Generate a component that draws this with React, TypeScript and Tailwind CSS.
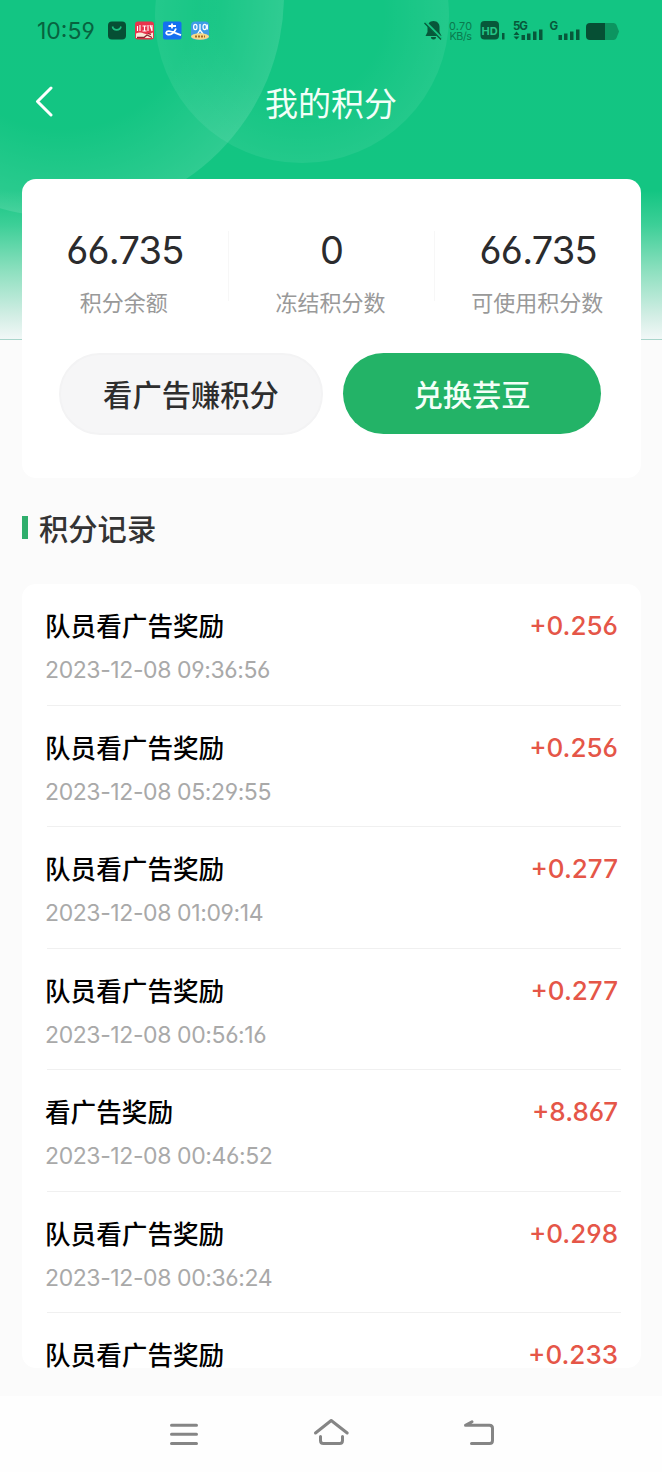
const INTER = "font-['Inter','Noto_Sans_CJK_SC',sans-serif] [font-feature-settings:'cv03','cv04']";

type PointRecord = { id: number; title: string; time?: string; amount: string };

const records: PointRecord[] = [
  { id: 1, title: '队员看广告奖励', time: '2023-12-08 09:36:56', amount: '+0.256' },
  { id: 2, title: '队员看广告奖励', time: '2023-12-08 05:29:55', amount: '+0.256' },
  { id: 3, title: '队员看广告奖励', time: '2023-12-08 01:09:14', amount: '+0.277' },
  { id: 4, title: '队员看广告奖励', time: '2023-12-08 00:56:16', amount: '+0.277' },
  { id: 5, title: '看广告奖励', time: '2023-12-08 00:46:52', amount: '+8.867' },
  { id: 6, title: '队员看广告奖励', time: '2023-12-08 00:36:24', amount: '+0.298' },
  { id: 7, title: '队员看广告奖励', amount: '+0.233' },
];

function HeaderBackground() {
  return (
    <svg className="absolute left-0 top-0" width="662" height="340" viewBox="0 0 662 340" aria-hidden="true">
      <defs>
        <linearGradient id="base" x1="0" y1="0" x2="0" y2="1">
          <stop offset="0" stopColor="#13c583" />
          <stop offset="0.56" stopColor="#13c582" />
          <stop offset="0.66" stopColor="#3ccf97" />
          <stop offset="0.8" stopColor="#8fe0c0" />
          <stop offset="0.93" stopColor="#d3eee5" />
          <stop offset="1" stopColor="#f3f8f8" />
        </linearGradient>
        <radialGradient id="ringA" gradientUnits="userSpaceOnUse" cx="62" cy="-5" r="222">
          <stop offset="0.6" stopColor="#fff" stopOpacity="0" />
          <stop offset="1" stopColor="#fff" stopOpacity="0.12" />
        </radialGradient>
        <radialGradient id="ringB" gradientUnits="userSpaceOnUse" cx="302" cy="16" r="147">
          <stop offset="0.55" stopColor="#fff" stopOpacity="0" />
          <stop offset="1" stopColor="#fff" stopOpacity="0.07" />
        </radialGradient>
      </defs>
      <rect width="662" height="340" fill="url(#base)" />
      <circle cx="62" cy="-5" r="222" fill="url(#ringA)" />
      <circle cx="302" cy="16" r="147" fill="url(#ringB)" />
    </svg>
  );
}

function StatusBar() {
  return (
    <div className="flex h-[62px] items-center justify-between pl-[37px] pr-[42px] text-[#07633f]">
      <div className="flex items-center">
        <span className={`w-[70px] text-[23px] leading-[30px] ${INTER}`}>10:59</span>
        <svg width="104" height="20" viewBox="107 21 104 20" aria-hidden="true">
          <rect x="108" y="21.500" width="18" height="18" rx="4" fill="#064f34" />
          <path d="M112.500 26.500c.8 4.500 7.500 4.500 8.500 0" fill="none" stroke="#1bbf80" strokeWidth="1.700" />
          <rect x="135" y="21.500" width="19" height="18" rx="3" fill="#e8344c" />
          <path d="M137.500 26v5M140 25v6M142.500 26h4M144.500 26v5M142.500 31h4M148 25v6M150 25l2 6M152 25v6" stroke="#fff" strokeWidth="1.100" fill="none" />
          <path d="M136 33.500q4-2 8 0t9-1v5.500h-17z" fill="#fbe9d8" />
          <path d="M137 37.500h7l3-2.500 5 2.500M148 33.500l3 1" stroke="#8b2430" strokeWidth="1.300" fill="none" />
          <rect x="163" y="21.500" width="18.500" height="18" rx="2" fill="#1470f0" />
          <path d="M168.500 26h7.500M172 23.500v5M176 28.500c-1.500 4-5 6.500-8 6-3-.6-2-3.500 1-3.300 4 .3 7 2.300 12 4" fill="none" stroke="#fff" strokeWidth="1.800" />
          <rect x="191" y="21.500" width="18" height="18" rx="4" fill="#3f9ce6" />
          <ellipse cx="195.300" cy="27" rx="1.700" ry="2.600" fill="none" stroke="#fff" strokeWidth="1.200" />
          <ellipse cx="204.700" cy="27" rx="1.700" ry="2.600" fill="none" stroke="#fff" strokeWidth="1.200" />
          <path d="M200 24v6l-2.500 4M200 30l3 4M207.300 24.500v5" stroke="#fff" strokeWidth="1.300" fill="none" />
          <ellipse cx="200" cy="36.500" rx="9" ry="3.200" fill="#f6d988" />
          <path d="M195 36.500h10" stroke="#a66a25" strokeWidth="2" strokeDasharray="2 1" />
        </svg>
      </div>
      <div className="flex items-center">
        <svg width="20" height="20" viewBox="424 21 20 20" aria-hidden="true">
          <path d="M433.500 21c4 0 6 3 6 6v5l2 4h-16l2-4v-5c0-3 2-6 6-6zM431 37h5a2.500 2.500 0 0 1-5 0z" fill="#07583a" />
          <path d="M425 22l16.500 16.500" stroke="#16c482" strokeWidth="3" />
          <path d="M424.500 23l16.500 16.500" stroke="#07583a" strokeWidth="1.300" />
        </svg>
        <svg className="ml-[4px]" width="32" height="24" viewBox="448 19 32 24" fontSize="10.800" fill="#0a7a4e" fontFamily="Inter, sans-serif" aria-hidden="true">
          <text x="449" y="30" textLength="23">0.70</text>
          <text x="449.500" y="40" textLength="22.500">KB/s</text>
        </svg>
        <svg width="140" height="24" viewBox="480 19 140 24" aria-hidden="true">
          <g fill="#07583a">
            <rect x="480.500" y="21" width="18.500" height="18.500" rx="4" />
            <rect x="502" y="33" width="2.500" height="6.500" />
            <rect x="521.500" y="35" width="3.500" height="5" />
            <rect x="527" y="33.500" width="3.500" height="6.500" />
            <rect x="533" y="31.500" width="3.500" height="8.500" />
            <rect x="539" y="29.500" width="3.500" height="10.500" />
            <rect x="558.500" y="35" width="3.500" height="5" />
            <rect x="564" y="33.500" width="3.500" height="6.500" />
            <rect x="570" y="31.500" width="3.500" height="8.500" />
            <rect x="576" y="29.500" width="3.500" height="10.500" />
            <path d="M513.500 35l3-3.500 3 3.500zM513.500 36.500h6l-3 3z" />
          </g>
          <path d="M590 23h15v17h-15q-4 0-4-4v-9q0-4 4-4z" fill="#064f34" />
          <path d="M605 23h8.500q2 0 3 2l2.500 6.500-2.500 6.500q-1 2-3 2h-8.500z" fill="#0c9560" />
          <text x="489.700" y="34.500" textAnchor="middle" fontSize="11" fontWeight="700" fill="#25c587" fontFamily="Inter, sans-serif">HD</text>
          <text x="513" y="30" fontSize="11.500" fontWeight="700" fill="#07583a" fontFamily="Inter, sans-serif" textLength="15">5G</text>
          <text x="549.500" y="30" fontSize="11.500" fontWeight="700" fill="#07583a" fontFamily="Inter, sans-serif">G</text>
        </svg>
      </div>
    </div>
  );
}

function Stat({ value, label }: { value: string; label: string }) {
  return (
    <div className="flex flex-1 flex-col items-center">
      <span className={`text-[38px] leading-[46px] tracking-[-0.8px] text-[#2b2b2d] ${INTER}`}>{value}</span>
      <span className="mt-[12px] mr-[2px] text-[22px] leading-8 whitespace-nowrap text-[#999]">{label}</span>
    </div>
  );
}

export default function App() {
  return (
    <div className="relative flex h-[1472px] w-[662px] flex-col overflow-hidden bg-[#fbfbfb] font-['Noto_Sans_CJK_SC',sans-serif]">
      <HeaderBackground />
      <div className="absolute left-0 top-[339px] h-px w-full bg-[#a9d5cb]" />
      <div className="relative flex min-h-0 flex-1 flex-col">
        <StatusBar />
        <header className="grid h-[117px] grid-cols-[100px_1fr_100px] items-start pt-[19px]">
          <svg className="ml-[34px] mt-[4px]" width="22" height="32" viewBox="0 0 22 32" fill="none" stroke="#fff" strokeWidth="3" strokeLinecap="round" strokeLinejoin="round" aria-hidden="true">
            <path d="M17 3L3.500 16.500 17 30" />
          </svg>
          <h1 className="text-center text-[33px] leading-[42px] text-[#f2fff8]">我的积分</h1>
        </header>

        <section className="mx-[22px] h-[299px] w-[619px] shrink-0 rounded-[14px] bg-white pt-[48px]">
          <div className="flex">
            <Stat value="66.735" label="积分余额" />
            <div className="mt-1 h-[70px] w-px bg-[#f7f7f7]" />
            <Stat value="0" label="冻结积分数" />
            <div className="mt-1 h-[70px] w-px bg-[#f7f7f7]" />
            <Stat value="66.735" label="可使用积分数" />
          </div>
          <div className="mt-[36px] flex gap-[20px] pl-[37px]">
            <button className="h-[82px] w-[264px] rounded-full border-2 border-[#f3f3f4] bg-[#f6f6f7] pb-[2px] text-[29.300px] leading-[42px] font-medium text-[#2e2e2e]">看广告赚积分</button>
            <button className="h-[81px] w-[258px] rounded-full bg-[#23b367] pb-[2px] text-[29.300px] leading-[42px] font-medium text-[#f4fff8]">兑换芸豆</button>
          </div>
        </section>

        <div className="mt-[28px] flex h-[42px] shrink-0 items-center pl-[22px]">
          <div className="h-[23px] w-[6px] bg-[#2fae6c]" />
          <h2 className="ml-[11px] text-[29.300px] leading-[42px] font-medium text-[#333]">积分记录</h2>
        </div>

        <ul className="mx-[22px] mt-[36px] h-[784px] w-[619px] shrink-0 rounded-[14px] bg-white pl-[23px] pr-[20px]">
          {records.map((r) => (
            <li key={r.id} className={r.time ? 'h-[121.500px]' : ''}>
              <div className="flex items-start justify-between pt-[22px] pr-[3px]">
                <div className="flex flex-col">
                  <span className="text-[25.600px] leading-[38px] font-medium text-black">{r.title}</span>
                  {r.time && (
                    <span className={`mt-[10px] h-[51.500px] text-[23px] leading-[32px] tracking-[-0.4px] text-[#a9a9a9] ${INTER}`}>{r.time}</span>
                  )}
                </div>
                <span className={`mt-[1px] text-[26px] leading-[38px] font-medium text-[#e55648] ${INTER}`}>{r.amount}</span>
              </div>
              {r.time && <div className="ml-[2px] -mt-px h-px bg-[#f0f0f0]" />}
            </li>
          ))}
        </ul>
      </div>

      <nav className="relative flex h-[76px] shrink-0 items-center justify-center bg-[#fefefe]">
        <svg width="330" height="32" viewBox="166 1418 330 32" fill="none" stroke="#858585" strokeWidth="3" strokeLinecap="round" strokeLinejoin="round" aria-hidden="true">
          <path d="M171.500 1425.200h25M171.500 1434.300h25M171.500 1443.500h25" />
          <path d="M315.500 1433l15.700-12.500 16 12.500M320.500 1436.500v4q0 3 3 3h16q3 0 3-3v-4" />
          <path d="M465.500 1425.200h24q3 0 3 3v12.300q0 3-3 3h-18M465.500 1425.200l6.500-3.500" />
        </svg>
      </nav>
    </div>
  );
}
